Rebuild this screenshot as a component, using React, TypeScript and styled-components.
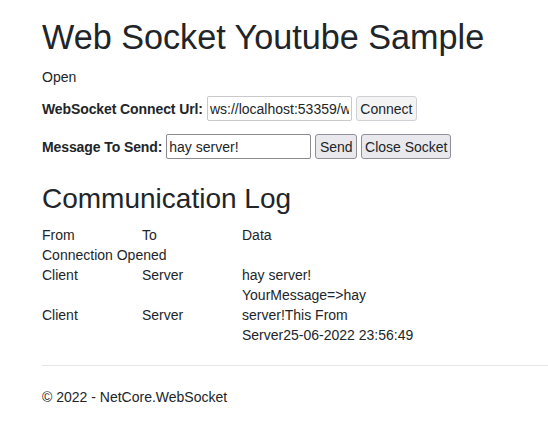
import React from "react";
import styled, { createGlobalStyle } from "styled-components";

const Global = createGlobalStyle`
  html, body { margin: 0; padding: 0; background: #fff; }
  body {
    font-family: "Liberation Sans", Arial, sans-serif;
    font-size: 14px;
    line-height: 20px;
    color: #212529;
    overflow: hidden;
  }
`;

const Page = styled.div`
  padding-left: 42px;
`;

const Title = styled.h1`
  font-size: 34.2px;
  font-weight: 400;
  line-height: 42px;
  margin: 16px 0 9px;
`;

const Status = styled.p`
  margin: 0 0 9px;
`;

const FormRow = styled.div`
  display: flex;
  align-items: center;
  gap: 4px;
  height: 25px;
  margin-bottom: 13px;
`;

const Label = styled.label`
  font-weight: 700;
  letter-spacing: -0.1px;
`;

const Input = styled.input<{ $w: number; $muted?: boolean }>`
  box-sizing: border-box;
  width: ${(p) => p.$w}px;
  height: 25px;
  padding: 1px 2px;
  font-family: "Liberation Sans", Arial, sans-serif;
  font-size: 14px;
  color: #212529;
  background: #fff;
  border: 1px solid ${(p) => (p.$muted ? "#c9c9cc" : "#8a8a90")};
  border-radius: 2px;
  outline: none;
`;

const Button = styled.button<{ $w: number; $muted?: boolean }>`
  box-sizing: border-box;
  width: ${(p) => p.$w}px;
  height: 25px;
  padding: 0;
  font-family: "Liberation Sans", Arial, sans-serif;
  font-size: 14px;
  color: #212529;
  background: ${(p) => (p.$muted ? "#f4f4f5" : "#e9e9ed")};
  border: 1px solid ${(p) => (p.$muted ? "#d0d0d4" : "#8f8f9d")};
  border-radius: 3px;
`;

const SubTitle = styled.h2`
  font-size: 28px;
  font-weight: 400;
  line-height: 34px;
  margin: 23px 0 9px;
`;

const Log = styled.table`
  border-collapse: collapse;
  border-spacing: 0;
`;

const Cell = styled.td<{ $w?: number }>`
  padding: 0;
  vertical-align: middle;
  line-height: 20px;
  width: ${(p) => (p.$w ? `${p.$w}px` : "auto")};
`;

const NoBreak = styled.span`
  white-space: nowrap;
`;

const Rule = styled.hr`
  border: 0;
  border-top: 1px solid #e5e5e5;
  margin: 20px 0 0;
`;

const Footer = styled.footer`
  padding-top: 21px;
  line-height: 20px;
`;

export default function App() {
  return (
    <>
      <Global />
      <Page>
        <Title>Web Socket Youtube Sample</Title>
        <Status>Open</Status>
        <FormRow>
          <Label>WebSocket Connect Url:</Label>
          <Input $w={145} $muted defaultValue="ws://localhost:53359/ws" />
          <Button $w={61} $muted>Connect</Button>
        </FormRow>
        <FormRow>
          <Label>Message To Send:</Label>
          <Input $w={145} defaultValue="hay server!" />
          <Button $w={42}>Send</Button>
          <Button $w={90}>Close Socket</Button>
        </FormRow>
        <SubTitle>Communication Log</SubTitle>
        <Log>
          <tbody>
            <tr>
              <Cell $w={100}>From</Cell>
              <Cell $w={100}>To</Cell>
              <Cell $w={175}>Data</Cell>
            </tr>
            <tr>
              <Cell colSpan={3}>Connection Opened</Cell>
            </tr>
            <tr>
              <Cell>Client</Cell>
              <Cell>Server</Cell>
              <Cell>hay server!</Cell>
            </tr>
            <tr>
              <Cell>Client</Cell>
              <Cell>Server</Cell>
              <Cell>
                YourMessage=&gt;hay server!This From <NoBreak>Server25-06-2022</NoBreak> 23:56:49
              </Cell>
            </tr>
          </tbody>
        </Log>
        <Rule />
        <Footer>© 2022 - NetCore.WebSocket</Footer>
      </Page>
    </>
  );
}
